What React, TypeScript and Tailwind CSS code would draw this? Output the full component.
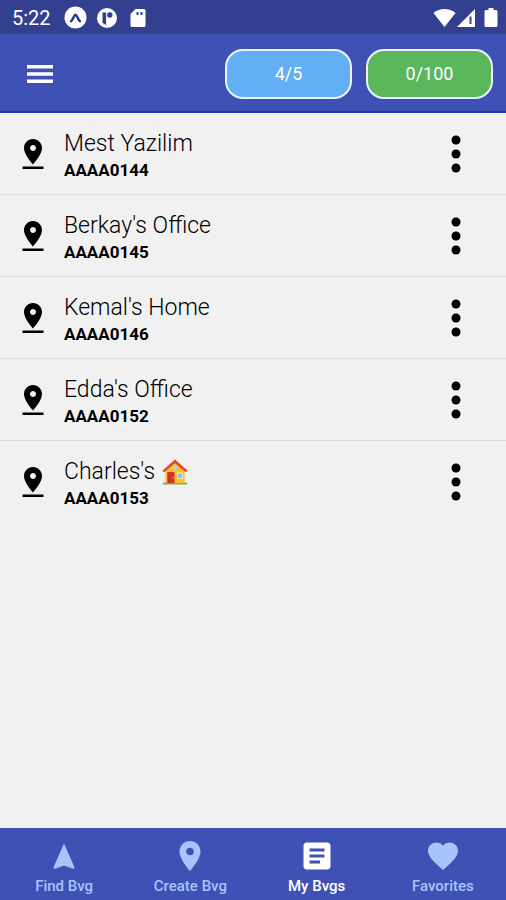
import React, { useState } from 'react';
import { clsx } from 'clsx';

type Bvg = {
  code: string;
  name: string;
  home?: boolean;
};

const bvgs: Bvg[] = [
  { code: 'AAAA0144', name: 'Mest Yazilim' },
  { code: 'AAAA0145', name: "Berkay's Office" },
  { code: 'AAAA0146', name: "Kemal's Home" },
  { code: 'AAAA0152', name: "Edda's Office" },
  { code: 'AAAA0153', name: "Charles's", home: true },
];

const tabs = [
  { label: 'Find Bvg', path: 'M12 3.7 4.9 19.9l.7.7L12 18.4l6.400 2.200.7-.7z' },
  {
    label: 'Create Bvg',
    path: 'M12 2C8.13 2 5 5.13 5 9c0 5.25 7 13 7 13s7-7.75 7-13c0-3.87-3.13-7-7-7zm0 9.5a2.5 2.5 0 0 1 0-5 2.5 2.5 0 0 1 0 5z',
  },
  {
    label: 'My Bvgs',
    path: 'M19 3H5c-1.1 0-2 .9-2 2v14c0 1.1.9 2 2 2h14c1.1 0 2-.9 2-2V5c0-1.1-.9-2-2-2zm-5 14H7v-2h7v2zm3-4H7v-2h10v2zm0-4H7V7h10v2z',
  },
  {
    label: 'Favorites',
    path: 'M12 21.35l-1.45-1.32C5.4 15.36 2 12.28 2 8.5 2 5.42 4.42 3 7.5 3c1.74 0 3.41.81 4.5 2.09C13.09 3.81 14.76 3 16.5 3 19.58 3 22 5.42 22 8.5c0 3.78-3.4 6.86-8.55 11.54L12 21.35z',
  },
];

const StatusBar = () => (
  <div className="flex h-[34px] items-center justify-between bg-[#333f8f] pt-px pr-2 pl-3 text-white">
    <div className="flex items-center">
      <span className="mr-[13px] text-[20px] leading-6">5:22</span>
      <svg className="mr-[9px] size-[23px]" viewBox="0 0 23 23" aria-hidden="true">
        <circle cx="11.5" cy="11.5" r="11" fill="#fff" />
        <path
          d="M7 15.2C9.3 13.8 10 8.6 11.5 8.6s2.2 5.2 4.5 6.600"
          fill="none"
          stroke="#2a367f"
          strokeWidth="2.4"
          strokeLinecap="round"
        />
      </svg>
      <svg className="mr-[12px] size-[22px]" viewBox="0 0 22 22" aria-hidden="true">
        <circle cx="11" cy="11" r="10" fill="#fff" />
        <path d="M6.5 5.5h3.6v12.6L6.5 16z" fill="#333f8f" />
        <circle cx="13.8" cy="8" r="2.7" fill="#333f8f" />
      </svg>
      <svg className="h-5 w-4" viewBox="0 0 16 20" aria-hidden="true">
        <path d="M5.5 1H14a1.5 1.5 0 0 1 1.5 1.5v15A1.5 1.5 0 0 1 14 19H2a1.5 1.5 0 0 1-1.5-1.5V6z" fill="#fff" />
        <path d="M6.5 4h2v3h-2zM10.5 4h2v3h-2z" fill="#333f8f" />
      </svg>
    </div>
    <div className="flex items-center">
      <svg className="h-5 w-[23px]" viewBox="0 0 23 20" aria-hidden="true">
        <path d="M.5 5C6.5-.2 16.5-.2 22.5 5L11.5 19z" fill="#fff" />
      </svg>
      <svg className="mr-[8px] size-5" viewBox="0 0 20 20" aria-hidden="true">
        <path d="M19 1v18H1z" fill="#fff" />
        <path d="M13.5 8.5h2V16h-2z" fill="#333f8f" />
      </svg>
      <svg className="h-5 w-[14px]" viewBox="0 0 14 20" aria-hidden="true">
        <path d="M4.5 0h5v2H12a1.5 1.5 0 0 1 1.5 1.5v14A1.5 1.5 0 0 1 12 19H2a1.5 1.5 0 0 1-1.5-1.5v-14A1.5 1.5 0 0 1 2 2h2.5z" fill="#fff" />
      </svg>
    </div>
  </div>
);

const Header = () => (
  <header className="flex h-[79px] items-center justify-between border-b-2 border-[#1e3aa0] bg-[#3f51b5] pt-[3px] pr-[13px] pl-[27px]">
    <button aria-label="Menu" className="text-white">
      <svg className="h-[18px] w-[26px]" viewBox="0 0 26 18" fill="currentColor" aria-hidden="true">
        <path d="M0 0h26v3.500H0zM0 7.200h26v3.500H0zM0 14.500h26V18H0z" />
      </svg>
    </button>
    <div className="flex gap-[14px] text-[18px] leading-6 text-white">
      <button className="h-[50px] w-[127px] rounded-[18px] border-2 border-[#eef2ff] bg-[#62aff5]">4/5</button>
      <button className="h-[50px] w-[127px] rounded-[18px] border-2 border-[#eef2ff] bg-[#5ab75c]">0/100</button>
    </div>
  </header>
);

const HouseIcon = () => (
  <svg className="size-[26px]" viewBox="0 0 27 27" aria-hidden="true">
    <path d="M1 24.5h25v2H1z" fill="#7cb342" />
    <path d="M3.5 12 13.5 3l10 9v13h-20z" fill="#fbc02d" />
    <path d="M13.5.5.5 12l1.6 2L13.5 4.3 24.9 14l1.6-2z" fill="#e64a2e" />
    <path d="M5.5 13.5h7.500V25H5.500z" fill="#d32f2f" />
    <path d="M15.500 14h6.500v6.500h-6.500z" fill="#fff3c4" />
    <path d="M16.3 14.8h4.900v4.900h-4.900z" fill="#81c9ee" />
    <circle cx="13.5" cy="9" r="2.2" fill="#a5d8ef" />
    <circle cx="11.500" cy="19.5" r=".7" fill="#fbc02d" />
  </svg>
);

const BvgRow = ({ bvg }: { bvg: Bvg }) => (
  <li className="flex h-[82px] items-center border-b border-[#dcdcdc] pr-[38px] pl-[15px] last:border-0">
    <svg className="mr-[13px] size-9 shrink-0" viewBox="0 0 24 24" aria-hidden="true">
      <path d="M18 8c0-3.31-2.69-6-6-6S6 4.69 6 8c0 4.5 6 11 6 11s6-6.5 6-11zm-8 0c0-1.1.9-2 2-2s2 .9 2 2-.89 2-2 2c-1.1 0-2-.9-2-2zM5 20.3v1.7h14v-1.7z" />
    </svg>
    <div className="min-w-0 flex-1 pt-1">
      <div className="flex items-center gap-[7px] text-[23px] leading-7 font-light">
        {bvg.name}
        {bvg.home && <HouseIcon />}
      </div>
      <div className="text-[17px] leading-6 font-bold">{bvg.code}</div>
    </div>
    <button aria-label={`Options for ${bvg.code}`}>
      <svg className="h-10 w-6" viewBox="0 0 24 40" aria-hidden="true">
        <circle cx="12" cy="6" r="4.5" />
        <circle cx="12" cy="20" r="4.5" />
        <circle cx="12" cy="34" r="4.5" />
      </svg>
    </button>
  </li>
);

export default function App() {
  const [active, setActive] = useState('My Bvgs');

  return (
    <div className="flex min-h-screen flex-col bg-[#f1f1f1] font-['Roboto',sans-serif] text-black">
      <StatusBar />
      <Header />
      <main className="flex-1">
        <ul>
          {bvgs.map((bvg) => (
            <BvgRow key={bvg.code} bvg={bvg} />
          ))}
        </ul>
      </main>
      <nav className="grid h-[72px] grid-cols-4 bg-[#3f51b5] pl-px">
        {tabs.map((tab) => (
          <button
            key={tab.label}
            onClick={() => setActive(tab.label)}
            className={clsx(
              'flex flex-col items-center pt-[10px] text-[15px] leading-6 font-medium',
              active === tab.label ? 'text-white' : 'text-[#a9c4fa]'
            )}
          >
            <svg className="size-9" viewBox="0 0 24 24" fill="currentColor" aria-hidden="true">
              <path d={tab.path} />
            </svg>
            {tab.label}
          </button>
        ))}
      </nav>
    </div>
  );
}
